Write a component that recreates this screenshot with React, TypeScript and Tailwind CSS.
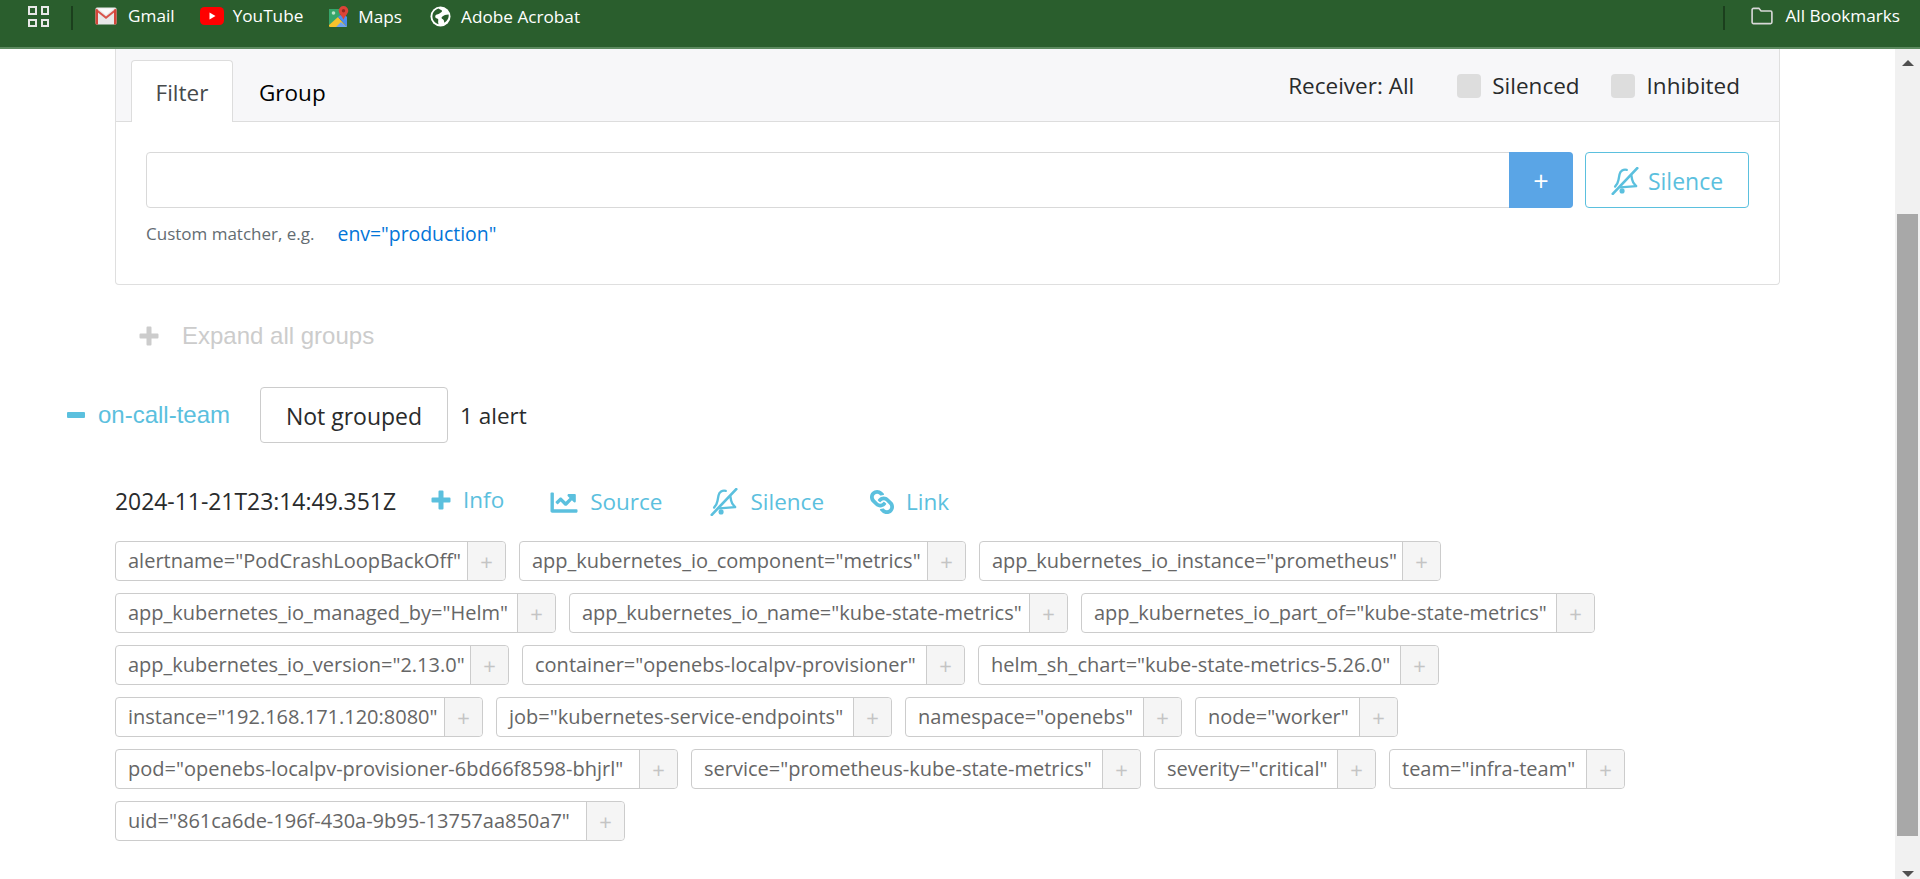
import React from 'react';
import { FaChartLine, FaLink } from 'react-icons/fa';

const LABELS = [
  { text: 'alertname="PodCrashLoopBackOff"', width: 'w-[391px]' },
  { text: 'app_kubernetes_io_component="metrics"', width: 'w-[447px]' },
  { text: 'app_kubernetes_io_instance="prometheus"', width: 'w-[462px]' },
  { text: 'app_kubernetes_io_managed_by="Helm"', width: 'w-[441px]' },
  { text: 'app_kubernetes_io_name="kube-state-metrics"', width: 'w-[499px]' },
  { text: 'app_kubernetes_io_part_of="kube-state-metrics"', width: 'w-[514px]' },
  { text: 'app_kubernetes_io_version="2.13.0"', width: 'w-[394px]' },
  { text: 'container="openebs-localpv-provisioner"', width: 'w-[443px]' },
  { text: 'helm_sh_chart="kube-state-metrics-5.26.0"', width: 'w-[461px]' },
  { text: 'instance="192.168.171.120:8080"', width: 'w-[368px]' },
  { text: 'job="kubernetes-service-endpoints"', width: 'w-[396px]' },
  { text: 'namespace="openebs"', width: 'w-[277px]' },
  { text: 'node="worker"', width: 'w-[203px]' },
  { text: 'pod="openebs-localpv-provisioner-6bd66f8598-bhjrl"', width: 'w-[563px]' },
  { text: 'service="prometheus-kube-state-metrics"', width: 'w-[450px]' },
  { text: 'severity="critical"', width: 'w-[222px]' },
  { text: 'team="infra-team"', width: 'w-[236px]' },
  { text: 'uid="861ca6de-196f-430a-9b95-13757aa850a7"', width: 'w-[510px]' },
];

function BellSlash({ className }: { className?: string }) {
  return (
    <svg viewBox="0 0 24 24" className={className} fill="none" stroke="currentColor" strokeWidth="2" strokeLinecap="round" strokeLinejoin="round">
      <path d="M13.500 2.500c-3-.8-5.600 1-6.200 4l-.9 4.600c-.4 1.900-1.200 3.600-2.400 5l-.5.700" />
      <path d="M17.500 7.500l.6 3.200c.4 2 1.400 3.700 2.900 5.100l.6.600-13.500 1" />
      <path d="M1.500 23L22.500 1" strokeWidth="2.300" />
      <circle cx="9.500" cy="20.500" r="2.200" fill="currentColor" stroke="none" />
    </svg>
  );
}

function PlusIcon({ className }: { className?: string }) {
  return (
    <svg viewBox="0 0 20 20" className={className} fill="currentColor">
      <path d="M7.500 1.500a1 1 0 0 1 1-1h3a1 1 0 0 1 1 1v6h6a1 1 0 0 1 1 1v3a1 1 0 0 1-1 1h-6v6a1 1 0 0 1-1 1h-3a1 1 0 0 1-1-1v-6h-6a1 1 0 0 1-1-1v-3a1 1 0 0 1 1-1h6z" />
    </svg>
  );
}

function GmailIcon() {
  return (
    <svg viewBox="0 0 22 18" className="h-[18px] w-[22px]">
      <rect x="0.500" y="0.500" width="21" height="17" rx="1.500" fill="#e8e8e8" />
      <path d="M1 1.500L11 9.500l10-8V4l-10 8L1 4z" fill="#d9534a" />
      <path d="M3 1.500L11 8l8-6.500z" fill="#fafafa" />
      <path d="M.5 2.500h2.500v15H1.500a1 1 0 0 1-1-1zM19 2.500h2.500v14a1 1 0 0 1-1 1H19z" fill="#d3453a" />
    </svg>
  );
}

function YoutubeIcon() {
  return (
    <svg viewBox="0 0 24 18" className="h-[18px] w-[24px]">
      <rect width="24" height="18" rx="4.500" fill="#f00" />
      <path d="M9.500 5.500v7l6-3.500z" fill="#fff" />
    </svg>
  );
}

function MapsIcon() {
  return (
    <svg viewBox="0 0 20 22" className="h-[22px] w-[20px]">
      <path d="M0 3h11v8L0 19z" fill="#36a56a" />
      <path d="M0 19L9 11l9 10H1a1 1 0 0 1-1-1z" fill="#f6c22c" />
      <path d="M9 11l5-4 4 4v10z" fill="#4d8ded" />
      <path d="M7 21l5-5 6 5z" fill="#6ea3f0" />
      <circle cx="4.500" cy="7" r="1.800" fill="#b9e2c6" />
      <path d="M14.500 0a4.800 4.800 0 0 1 4.800 4.800c0 3-3.300 5-4.800 9-1.500-4-4.800-6-4.800-9A4.800 4.800 0 0 1 14.500 0z" fill="#db4437" />
      <circle cx="14.500" cy="4.800" r="1.700" fill="#8f2a22" />
    </svg>
  );
}

function GlobeIcon() {
  return (
    <svg viewBox="0 0 22 22" className="h-[21px] w-[21px]">
      <circle cx="11" cy="11" r="10.500" fill="#fff" />
      <path d="M9 2.500c1.500 1.500 3 1 3.500 2.500s-1.500 2-3 3-3.500.5-4 2.500 1.500 2.500 3 3c.5 1.500-.5 3 .5 5.500-4-1-6.500-4.500-6.500-8 0-4 2.500-7.500 6.500-8.500z" fill="#2a5e2d" />
      <path d="M19.500 9c.5 3.500-1.500 7-4.500 8.500-.5-1.500 0-2.500-1.500-3.500s-2-2-.5-3 3.500-2 6.500-2z" fill="#2a5e2d" />
    </svg>
  );
}

function LabelChip({ text, width }: { text: string; width: string }) {
  return (
    <div className={`flex h-10 items-stretch rounded border border-[#cccccc] bg-white text-[20px] ${width}`}>
      <span className="flex min-w-0 flex-1 items-center whitespace-nowrap pl-3 leading-none text-[#666666]">{text}</span>
      <span className="flex w-[38px] shrink-0 items-center justify-center rounded-r border-l border-[#cccccc] bg-[#f5f5f5] text-[22px] text-[#c4c4c4]">+</span>
    </div>
  );
}

export default function App() {
  return (
    <div className="flex h-screen flex-col overflow-hidden bg-white text-[22.500px] text-[#292b2c]" style={{ fontFamily: '"Open Sans", sans-serif' }}>
      {/* Bookmarks bar */}
      <div className="flex h-[49px] shrink-0 items-start border-b-2 border-[#5c8a5f] bg-[#2a5e2d] pt-[6px] text-[17.200px] leading-[20px] text-white">
        <div className="ml-[28px] grid h-[21px] w-[21px] grid-cols-2 gap-[4px]">
          <span className="border-2 border-[#e8e8e8]" />
          <span className="border-2 border-[#e8e8e8]" />
          <span className="border-2 border-[#e8e8e8]" />
          <span className="border-2 border-[#e8e8e8]" />
        </div>
        <span className="ml-[22px] h-6 w-[2px] bg-[#1b3f1d]" />
        <div className="ml-[22px] flex items-center gap-[11px]"><GmailIcon /><span>Gmail</span></div>
        <div className="ml-[25px] flex items-center gap-[9px]"><YoutubeIcon /><span>YouTube</span></div>
        <div className="ml-[26px] flex items-center gap-[9px]"><MapsIcon /><span>Maps</span></div>
        <div className="ml-[28px] flex items-center gap-[10px]"><GlobeIcon /><span>Adobe Acrobat</span></div>
        <span className="ml-auto h-6 w-[2px] bg-[#1b3f1d]" />
        <div className="ml-[25px] mr-[20px] flex items-center gap-[11px]">
          <svg viewBox="0 0 24 20" className="h-[18px] w-[24px]" fill="none" stroke="#d8d8d8" strokeWidth="1.800"><path d="M1 3a1.500 1.500 0 0 1 1.500-1.500h6l2.500 3h10.500A1.500 1.500 0 0 1 23 6v11a1.500 1.500 0 0 1-1.500 1.500h-19A1.500 1.500 0 0 1 1 17z" /></svg>
          <span>All Bookmarks</span>
        </div>
      </div>

      <div className="flex min-h-0 flex-1">
        <main className="min-w-0 flex-1">
          <div className="px-[115px]">
            {/* Filter card */}
            <div className="h-[236px] rounded-b border border-t-0 border-[#dfdfdf]">
              <div className="flex h-[73px] items-end border-b border-[#dddddd] bg-[#f7f7f9] pl-[15px]">
                <div className="-mb-px flex h-[62px] w-[102px] items-center justify-center rounded-t border border-b-0 border-[#dddddd] bg-white pt-[2px] text-[#464a4c]">Filter</div>
                <div className="flex h-[62px] items-center pl-[26px] pt-[5px] text-black">Group</div>
                <div className="mb-[20px] ml-auto flex items-center pr-[39px] leading-[30px] text-[#292b2c]">
                  <span>Receiver: All</span>
                  <span className="ml-[43px] h-6 w-6 rounded bg-[#dddddd]" />
                  <span className="ml-[11px]">Silenced</span>
                  <span className="ml-[31px] h-6 w-6 rounded bg-[#dddddd]" />
                  <span className="ml-[12px]">Inhibited</span>
                </div>
              </div>
              <div className="px-[30px] pt-[30px]">
                <div className="flex gap-3">
                  <div className="flex h-[56px] flex-1 rounded border border-[#d9d9d9] bg-white">
                    <div className="flex-1" />
                    <button className="-my-px -mr-px w-[64px] rounded-r bg-[#5aa5e6] text-[27px] leading-none text-white">+</button>
                  </div>
                  <button className="flex h-[56px] w-[164px] items-center justify-center gap-[9px] rounded border border-[#5bc0de] pt-[2px] text-[23px] text-[#5bc0de]">
                    <BellSlash className="h-7 w-7" />
                    Silence
                  </button>
                </div>
                <div className="mt-[11px] flex h-[30px] items-center text-[17px] text-[#636c72]">
                  Custom matcher, e.g.
                  <span className="ml-[23px] text-[19.400px] text-[#0275d8]">env="production"</span>
                </div>
              </div>
            </div>

            <div className="mt-[37px] flex h-7 items-center pl-[24px] text-[#cccccc]" style={{ fontFamily: '"Liberation Sans", sans-serif' }}>
              <PlusIcon className="h-5 w-5" />
              <span className="ml-[23px] text-[24px] leading-none">Expand all groups</span>
            </div>
          </div>

          <div className="mt-[37px] flex h-[56px] items-center pl-[67px]">
            <span className="h-[6px] w-[18px] rounded-[1px] bg-[#5bc0de]" />
            <span className="ml-[13px] w-[162px] text-[24px] leading-none text-[#5bc0de]" style={{ fontFamily: '"Liberation Sans", sans-serif' }}>on-call-team</span>
            <span className="flex h-[56px] w-[188px] items-center justify-center rounded border border-[#cccccc] pt-[2px] text-[23px] text-[#292b2c]">Not grouped</span>
            <span className="ml-3 pt-[1px]">1 alert</span>
          </div>

          <div className="px-[115px]">
            <div className="mt-[43px] flex h-8 items-center text-[#292b2c]">
              <span className="text-[22.900px]">2024-11-21T23:14:49.351Z</span>
              <span className="-mt-1 ml-[35px] flex items-center gap-[12px] text-[#5bc0de]"><PlusIcon className="h-5 w-5" />Info</span>
              <span className="ml-[46px] flex items-center gap-[12px] text-[#5bc0de]"><FaChartLine className="h-[27px] w-[28px]" />Source</span>
              <span className="ml-[48px] flex items-center gap-[12px] text-[#5bc0de]"><BellSlash className="h-7 w-7" />Silence</span>
              <span className="ml-[46px] flex items-center gap-[12px] text-[#5bc0de]"><FaLink className="h-[24px] w-[24px] rotate-90" />Link</span>
            </div>
            <div className="mt-[23px] flex flex-wrap gap-x-[13px] gap-y-3">
              {LABELS.map((label) => (
                <LabelChip key={label.text} text={label.text} width={label.width} />
              ))}
            </div>
          </div>
        </main>

        {/* Scrollbar */}
        <div className="flex w-[25px] shrink-0 flex-col items-center bg-[#f1f1f1] pb-[1px]">
          <div className="mt-[11px] h-0 w-0 border-x-[6px] border-b-[6px] border-x-transparent border-b-[#505050]" />
          <div className="mt-[148px] h-[622px] w-[21px] bg-[#a8a8a8]" />
          <div className="mb-[1px] mt-auto h-0 w-0 border-x-[6px] border-t-[6px] border-x-transparent border-t-[#505050]" />
        </div>
      </div>
    </div>
  );
}
